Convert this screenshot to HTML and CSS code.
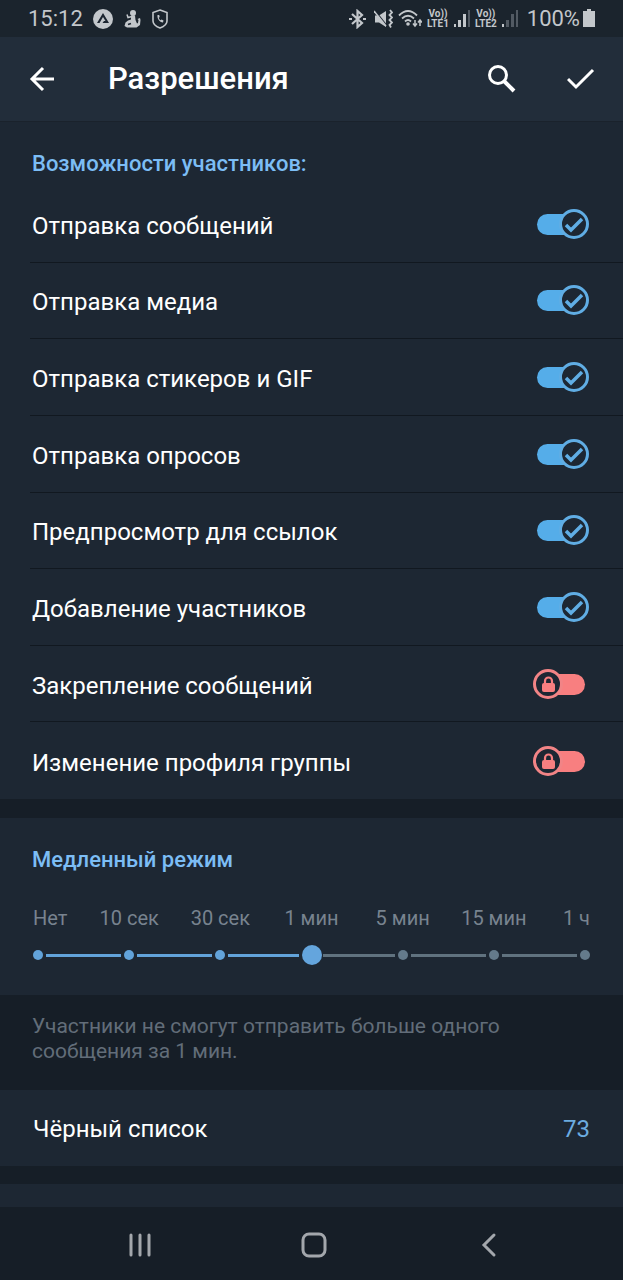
FILE: index.html
```
<!DOCTYPE html>
<html lang="ru">
	<head>
	<meta charset="utf-8">
	<meta name="viewport" content="width=device-width, initial-scale=1">
	<title>Разрешения</title>
	<link rel="stylesheet" href="styles.css">
	</head>
	<body>
		<div class="status">
			<div class="status-left">
				<span class="status-text">15:12</span>
				<svg width="20" height="20" viewBox="0 0 20 20">
					<circle cx="10" cy="10" r="10" fill="#c3c7cb"/>
					<path d="M4 14L10 4L16 14H9.500L11 12H12.500L10 8L6.500 14Z" fill="#1c2530"/>
				</svg>
				<svg class="wide" width="17" height="20" viewBox="0 0 17 20" fill="#c3c7cb">
					<circle cx="9" cy="4" r="3"/>
					<path d="M7 6.500H11L11.500 11L13 14.500L14 14L14.500 11L13.500 10L16 9L16.500 11L16 16L12.500 18.500H3L0.500 17L1.500 13.500L4 11.500L7 10.500Z"/>
					<path d="M8 7.500L4 8.500L3 5.500" fill="none" stroke="#c3c7cb" stroke-width="1.500"/>
					<path d="M4 15.500L7 14.500" stroke="#1c2530" stroke-width="1.500"/>
				</svg>
				<svg class="wide" width="16" height="20" viewBox="0 0 16 20">
					<path d="M8 1L15 3.500V12C15 15 12 17.500 8 19C4 17.500 1 15 1 12V3.500Z" fill="none" stroke="#c3c7cb" stroke-width="1.600"/>
					<path d="M5.500 6C5 10 7.500 13 11 13.500L11.500 11.500L9.500 10.500L8.500 11.200C7.500 10.500 7 9.500 6.800 8.700L7.700 8L7.200 6Z" fill="#c3c7cb"/>
				</svg>
			</div>
			<div class="status-right">
				<svg width="17" height="20" viewBox="0 0 17 20" fill="none" stroke="#c3c7cb" stroke-width="2.200">
					<path d="M3 5L13 14L8.500 18V2L13 6L3 15"/>
					<path d="M0 10H3M14 10H17"/>
				</svg>
				<svg width="19" height="20" viewBox="0 0 19 20" fill="none" stroke="#c3c7cb" stroke-width="2">
					<path d="M1 6.500H5L12 2V18L5 13.500H1Z" fill="#c3c7cb" stroke="none"/>
					<path d="M2 3L13 17" stroke="#1c2530" stroke-width="1.500"/>
					<path d="M0 2L12 17" stroke-width="1.500"/>
					<path d="M16 1L18 3.500L15.500 6L18 8.500L15.500 11L18 13.500L15.500 16L17 18.500" stroke-width="1.800"/>
				</svg>
				<svg width="24" height="20" viewBox="0 0 24 20" fill="none" stroke="#c3c7cb" stroke-width="1.800">
					<path d="M1 6.500Q10 -2.500 19 6.500M4 9.500Q10 4 16 9.500M7 12.500Q10 9.500 13 12.500"/>
					<circle cx="10" cy="15" r="1.800" fill="#c3c7cb" stroke="none"/>
					<path d="M17 11V17M15 14.500L17 17L19 14.500M22 17V11M20 13.500L22 11L24 13.500" stroke-width="1.500"/>
				</svg>
				<span class="volte"><span>Vo))</span><span>LTE1</span></span>
				<svg width="16" height="19" viewBox="0 0 16 19" fill="#c3c7cb">
					<path d="M0 15H2V18H0ZM4 11H7V18H4ZM9 5H12V18H9Z"/><path d="M14 1H16V18H14Z" fill="#525a63"/>
				</svg>
				<span class="volte"><span>Vo))</span><span>LTE2</span></span>
				<svg width="16" height="19" viewBox="0 0 16 19" fill="#525a63">
					<path d="M0 15H2V18H0Z" fill="#c3c7cb"/><path d="M4 11H7V18H4ZM9 5H12V18H9ZM14 1H16V18H14Z"/>
				</svg>
				<span class="status-text percent">100%</span>
				<svg class="battery" width="12" height="19" viewBox="0 0 12 19"><path d="M4 0H8V2H12V18H0V2H4Z" fill="#c3c7cb"/></svg>
			</div>
		</div>

		<header class="header">
			<button type="button" class="icon-btn" aria-label="Назад">
				<svg width="26" height="26" viewBox="0 0 26 26" fill="none" stroke="#fff" stroke-width="3"><path d="M26 13H4M15 2L4 13L15 24"/></svg>
			</button>
			<h1>Разрешения</h1>
			<button type="button" class="icon-btn" aria-label="Поиск">
				<svg width="28" height="28" viewBox="0 0 28 28" fill="none" stroke="#fff" stroke-width="3"><circle cx="10" cy="10" r="8.500"/><path d="M16 16L26 26" stroke-width="4"/></svg>
			</button>
			<button type="button" class="icon-btn done" aria-label="Готово">
				<svg width="28" height="28" viewBox="0 0 28 28" fill="none" stroke="#fff" stroke-width="3"><path d="M1 14L9 22L26 5"/></svg>
			</button>
		</header>

		<main>
			<section class="card">
				<h2>Возможности участников:</h2>
				<div class="rights">
					<label class="right"><span>Отправка сообщений</span><input type="checkbox" class="toggle" checked></label>
					<label class="right"><span>Отправка медиа</span><input type="checkbox" class="toggle" checked></label>
					<label class="right"><span>Отправка стикеров и GIF</span><input type="checkbox" class="toggle" checked></label>
					<label class="right"><span>Отправка опросов</span><input type="checkbox" class="toggle" checked></label>
					<label class="right"><span>Предпросмотр для ссылок</span><input type="checkbox" class="toggle" checked></label>
					<label class="right"><span>Добавление участников</span><input type="checkbox" class="toggle" checked></label>
					<label class="right"><span>Закрепление сообщений</span><input type="checkbox" class="toggle"></label>
					<label class="right"><span>Изменение профиля группы</span><input type="checkbox" class="toggle"></label>
				</div>
			</section>

			<section class="card slow">
				<h2 id="slow-title">Медленный режим</h2>
				<div class="slow-labels">
					<span>Нет</span>
					<span>10 сек</span>
					<span>30 сек</span>
					<span>1 мин</span>
					<span>5 мин</span>
					<span>15 мин</span>
					<span>1 ч</span>
				</div>
				<div class="slider">
					<div class="stops">
						<i class="dot on"></i><i class="line on"></i>
						<i class="dot on"></i><i class="line on"></i>
						<i class="dot on"></i><i class="line on before"></i>
						<i class="dot on"></i><i class="line after"></i>
						<i class="dot"></i><i class="line"></i>
						<i class="dot"></i><i class="line"></i>
						<i class="dot"></i>
					</div>
					<input type="range" min="0" max="6" step="1" value="3" aria-labelledby="slow-title">
				</div>
			</section>
			<p class="hint">Участники не смогут отправить больше одного сообщения за 1 мин.</p>

			<a href="#" class="card blacklist"><span>Чёрный список</span><span class="count">73</span></a>
			<div class="card next"></div>
		</main>

		<nav class="nav">
			<button type="button" aria-label="Недавние">
				<svg width="26" height="26" viewBox="0 0 26 26" stroke="#a3a7ac" stroke-width="3" stroke-linecap="round"><path d="M3 3V23M12 3V23M21 3V23"/></svg>
			</button>
			<button type="button" aria-label="Домой">
				<svg width="26" height="26" viewBox="0 0 26 26" fill="none" stroke="#a3a7ac" stroke-width="3"><rect x="2" y="2" width="22" height="22" rx="6"/></svg>
			</button>
			<button type="button" aria-label="Назад">
				<svg width="26" height="26" viewBox="0 0 26 26" fill="none" stroke="#a3a7ac" stroke-width="3" stroke-linecap="round"><path d="M19 3L9 13L19 23"/></svg>
			</button>
		</nav>
	</body>
</html>
```
FILE: styles.css
```
*{
	margin: 0;
	padding: 0;
	box-sizing: border-box;
}
body{
	display: flex;
	flex-direction: column;
	min-height: 100vh;
	font-family: Roboto, "Noto Sans", sans-serif;
	background: #161e27;
	color: #fff;
}
svg{
	display: block;
	flex: none;
}
button{
	background: none;
	border: none;
	cursor: pointer;
}

/* status bar */
.status{
	display: flex;
	justify-content: space-between;
	align-items: center;
	height: 37px;
	padding: 0 28px;
	background: #1b242d;
	color: #c3c7cb;
}
.status-left, .status-right{
	display: flex;
	align-items: center;
}
.status-left{
	gap: 10px;
}
.status-left .wide{
	margin-left: 1px;
}
.status-right{
	gap: 5px;
}
.status-right svg:first-child{
	margin-right: 3px;
}
.status-text{
	padding-top: 1px;
	font-size: 22px;
	line-height: 24px;
}
.percent{
	margin-left: 4px;
}
.battery{
	margin-left: -2px;
}
.volte{
	display: flex;
	flex-direction: column;
	align-items: center;
	font-size: 10px;
	line-height: 10px;
	font-weight: 700;
}

/* title bar */
.header{
	display: flex;
	align-items: center;
	height: 85px;
	padding: 0 28px;
	background: #222d3a;
	border-bottom: 1px solid #1a222c;
}
.header h1{
	flex: 1;
	margin-left: 54px;
	font-size: 31px;
	line-height: 36px;
	font-weight: 500;
}
.done{
	margin-left: 51px;
}

main{
	flex: 1;
	display: flex;
	flex-direction: column;
}
.card{
	background: #1d2733;
}
h2{
	padding: 0 32px;
	font-size: 22px;
	line-height: 28px;
	font-weight: 500;
	color: #7cbdf5;
}
.card h2{
	padding-top: 28px;
}

/* permission rows */
.rights{
	display: grid;
	grid-auto-rows: 1fr;
	min-height: 613px;
	margin-top: 8px;
}
.right{
	display: flex;
	justify-content: space-between;
	align-items: center;
	margin-left: 30px;
	padding: 0 33px 0 2px;
	font-size: 24px;
	line-height: 28px;
	border-bottom: 1px solid #111820;
	cursor: pointer;
}
.right:last-child{
	border-bottom: none;
}
.right span{
	padding-top: 4px;
}
.toggle{
	appearance: none;
	flex: none;
	width: 57px;
	height: 32px;
	cursor: pointer;
	background: url("data:image/svg+xml,%3Csvg xmlns='http://www.w3.org/2000/svg' viewBox='0 0 57 32'%3E%3Crect x='15' y='6' width='37' height='21' rx='10.500' fill='%23f87f80'/%3E%3Ccircle cx='15' cy='16' r='13.500' fill='%231d2733' stroke='%23f28486' stroke-width='3'/%3E%3Crect x='9' y='15' width='13' height='9' rx='2' fill='%23f87f80'/%3E%3Cpath d='M12 16V13a3.500 3.500 0 0 1 7 0V16' fill='none' stroke='%23f87f80' stroke-width='2.200'/%3E%3C/svg%3E") no-repeat;
}
.toggle:checked{
	background-image: url("data:image/svg+xml,%3Csvg xmlns='http://www.w3.org/2000/svg' viewBox='0 0 57 32'%3E%3Crect x='4' y='6' width='38' height='21' rx='10.500' fill='%2355ade9'/%3E%3Ccircle cx='41' cy='16' r='13.500' fill='%231d2733' stroke='%2360ade4' stroke-width='3'/%3E%3Cpath d='M33 17L38 22L49 11' fill='none' stroke='%2360ade4' stroke-width='3.500'/%3E%3C/svg%3E");
}

/* slow mode */
.slow{
	margin-top: 19px;
	padding-bottom: 30px;
}
.slow-labels{
	display: grid;
	grid-template-columns: repeat(12, 1fr);
	padding: 0 38px;
	margin-top: 32px;
	font-size: 20px;
	line-height: 24px;
	color: #78838f;
	text-align: center;
	white-space: nowrap;
}
.slow-labels span{
	grid-column: span 2;
}
.slow-labels span:first-child{
	grid-column: span 1;
	margin-left: -5px;
	text-align: left;
}
.slow-labels span:last-child{
	grid-column: span 1;
	margin-right: -5px;
	justify-self: end;
}
.slider{
	display: grid;
	align-items: center;
	margin-top: 15px;
}
.stops, .slider input{
	grid-area: 1 / 1;
}
.stops{
	display: grid;
	grid-template-columns: repeat(6, 10px 1fr) 10px;
	align-items: center;
	padding: 0 33px;
}
.dot{
	height: 10px;
	border-radius: 50%;
	background: #647a8b;
}
.line{
	height: 3px;
	margin: 0 3px;
	background: #60727f;
}
.on{
	background: #62a3da;
}
.before{
	margin-right: 7px;
}
.after{
	margin-left: 7px;
}
.slider input{
	appearance: none;
	height: 20px;
	margin: 0 28px;
	background: none;
}
.slider input::-webkit-slider-thumb{
	appearance: none;
	width: 20px;
	height: 20px;
	border-radius: 50%;
	background: #64a5dd;
}
.slider input::-moz-range-thumb{
	width: 20px;
	height: 20px;
	border: none;
	border-radius: 50%;
	background: #64a5dd;
}
.hint{
	max-width: 570px;
	padding: 19px 32px 26px;
	font-size: 21px;
	line-height: 25px;
	color: #626d79;
}

.blacklist{
	display: flex;
	justify-content: space-between;
	padding: 25px 33px 23px;
	font-size: 24px;
	line-height: 28px;
	color: #fff;
	text-decoration: none;
}
.count{
	color: #6cace0;
}
.next{
	flex: 1;
	margin-top: 18px;
}

/* system navigation */
.nav{
	display: flex;
	justify-content: space-around;
	align-items: center;
	height: 73px;
	padding: 2px 48px 0 54px;
	background: #161e27;
}
```
